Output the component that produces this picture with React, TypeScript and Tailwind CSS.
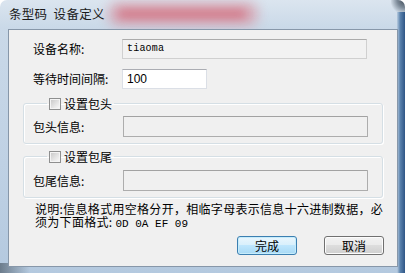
import React from "react";

function CheckBox() {
  return (
    <span className="inline-flex w-[12px] h-[12px] border border-[#8e8f8f] bg-[#f4f4f4] p-[1px] shrink-0">
      <span className="block w-full h-full bg-[linear-gradient(135deg,#cbcbcb_0%,#e6e6e6_60%,#f6f6f6_100%)]" />
    </span>
  );
}

function Group({
  title,
  label,
  legendMt,
  contentPt,
}: {
  title: string;
  label: string;
  legendMt: string;
  contentPt: string;
}) {
  return (
    <fieldset
      className={`${legendMt} ml-[14px] w-[360px] border border-[#d5dfe5] rounded-[3px] shadow-[inset_1px_1px_0_#ffffff,1px_1px_0_#ffffff] pl-[9px] pb-[6px] ${contentPt}`}
    >
      <legend className="ml-[14px] px-[2px] h-[13px] flex items-center gap-[3px] leading-[13px]">
        <CheckBox />
        <span>{title}</span>
      </legend>
      <div className="flex items-center h-[21px]">
        <span className="w-[90px] leading-[12px]">{label}</span>
        <div className="w-[245px] h-[21px] bg-[#f0f0f0] border border-[#adadad] border-t-[#a2a2a2] rounded-tr-[1px]" />
      </div>
    </fieldset>
  );
}

export default function App() {
  return (
    <div className="w-[405px] h-[273px] overflow-hidden relative flex flex-col rounded-t-[7px] bg-[linear-gradient(180deg,#dbe5ef_0%,#cad9e8_10%,#bfd1e4_60%,#b4c9df_100%)] font-['Noto_Sans_CJK_SC',sans-serif] text-[12px] text-black">
      {/* blurred background glow in title glass */}
      <div className="absolute left-[108px] top-[2px] w-[150px] h-[24px] rounded-[10px] bg-[#d98a98] opacity-60 blur-[6px]" />
      <div className="absolute left-[118px] top-[9px] w-[128px] h-[10px] rounded-[5px] bg-[#d0485a] opacity-45 blur-[4px]" />
      <div className="absolute right-0 top-0 w-[14px] h-[14px] bg-[radial-gradient(circle_at_100%_0%,#3b4652_0%,#7d8b99_40%,transparent_75%)]" />
      <div className="absolute right-0 top-[12px] w-[8px] bottom-0 bg-[linear-gradient(90deg,#b8cce0_0%,#5a82ad_40%,#2f5686_100%)]" />
      <div className="absolute left-0 bottom-0 w-[30px] h-[10px] bg-[linear-gradient(90deg,#4d5b68_0%,transparent_100%)] opacity-70" />

      {/* title bar */}
      <div className="relative h-[29px] shrink-0 pl-[9px] flex items-center pb-[2px]">
        <span className="text-[12.5px] leading-[14px] text-[#1a1a1a] tracking-[0.3px]">
          条型码&nbsp;&nbsp;设备定义
        </span>
      </div>

      {/* client area */}
      <div className="relative ml-[8px] w-[390px] h-[238px] shrink-0 border border-[#8797a9] bg-[#f0f0f0] flex flex-col">
        {/* row 1 */}
        <div className="mt-[9px] pl-[24px] flex items-center h-[20px]">
          <span className="w-[89px] leading-[12px]">设备名称:</span>
          <div className="w-[245px] h-[20px] bg-[#f2f2f2] border border-[#d0d0d0] border-t-[#ababab] flex items-center pl-[4px]">
            <span className="font-['Liberation_Mono',monospace] text-[10px] leading-[12px] tracking-[0.2px]">tiaoma</span>
          </div>
        </div>
        {/* row 2 */}
        <div className="mt-[10px] pl-[24px] flex items-center h-[20px]">
          <span className="w-[89px] leading-[12px]">等待时间间隔:</span>
          <div className="w-[85px] h-[20px] bg-white border border-[#dbdfe6] border-t-[#abadb3] flex items-center pl-[4px]">
            <span className="font-['Liberation_Sans',sans-serif] text-[12px] leading-[12px]">100</span>
          </div>
        </div>

        <Group title="设置包头" label="包头信息:" legendMt="mt-[8px]" contentPt="pt-[6px]" />
        <Group title="设置包尾" label="包尾信息:" legendMt="mt-[6px]" contentPt="pt-[7px]" />

        {/* note */}
        <div className="mt-[4px] pl-[26px] leading-[13px] text-[12px] tracking-[0.3px]">
          <div>说明:信息格式用空格分开，相临字母表示信息十六进制数据，必</div>
          <div>
            须为下面格式:&nbsp;
            <span className="font-['Liberation_Mono',monospace] text-[11px] tracking-normal">0D 0A EF 09</span>
          </div>
        </div>

        {/* buttons */}
        <div className="mt-[5px] pr-[13px] flex justify-end gap-[27px]">
          <button className="w-[60px] h-[19px] rounded-[3px] border border-[#3c7fb1] bg-[linear-gradient(180deg,#eaf6fd_0%,#d9f0fc_45%,#bee6fd_50%,#a7d9f5_100%)] shadow-[inset_0_0_0_1px_#c6ecfb] flex items-center justify-center leading-[12px] text-[12px]">
            完成
          </button>
          <button className="w-[60px] h-[19px] rounded-[3px] border border-[#707070] bg-[linear-gradient(180deg,#f2f2f2_0%,#ebebeb_45%,#dddddd_50%,#cfcfcf_100%)] shadow-[inset_0_0_0_1px_#fcfcfc] flex items-center justify-center leading-[12px] text-[12px]">
            取消
          </button>
        </div>
      </div>
    </div>
  );
}
